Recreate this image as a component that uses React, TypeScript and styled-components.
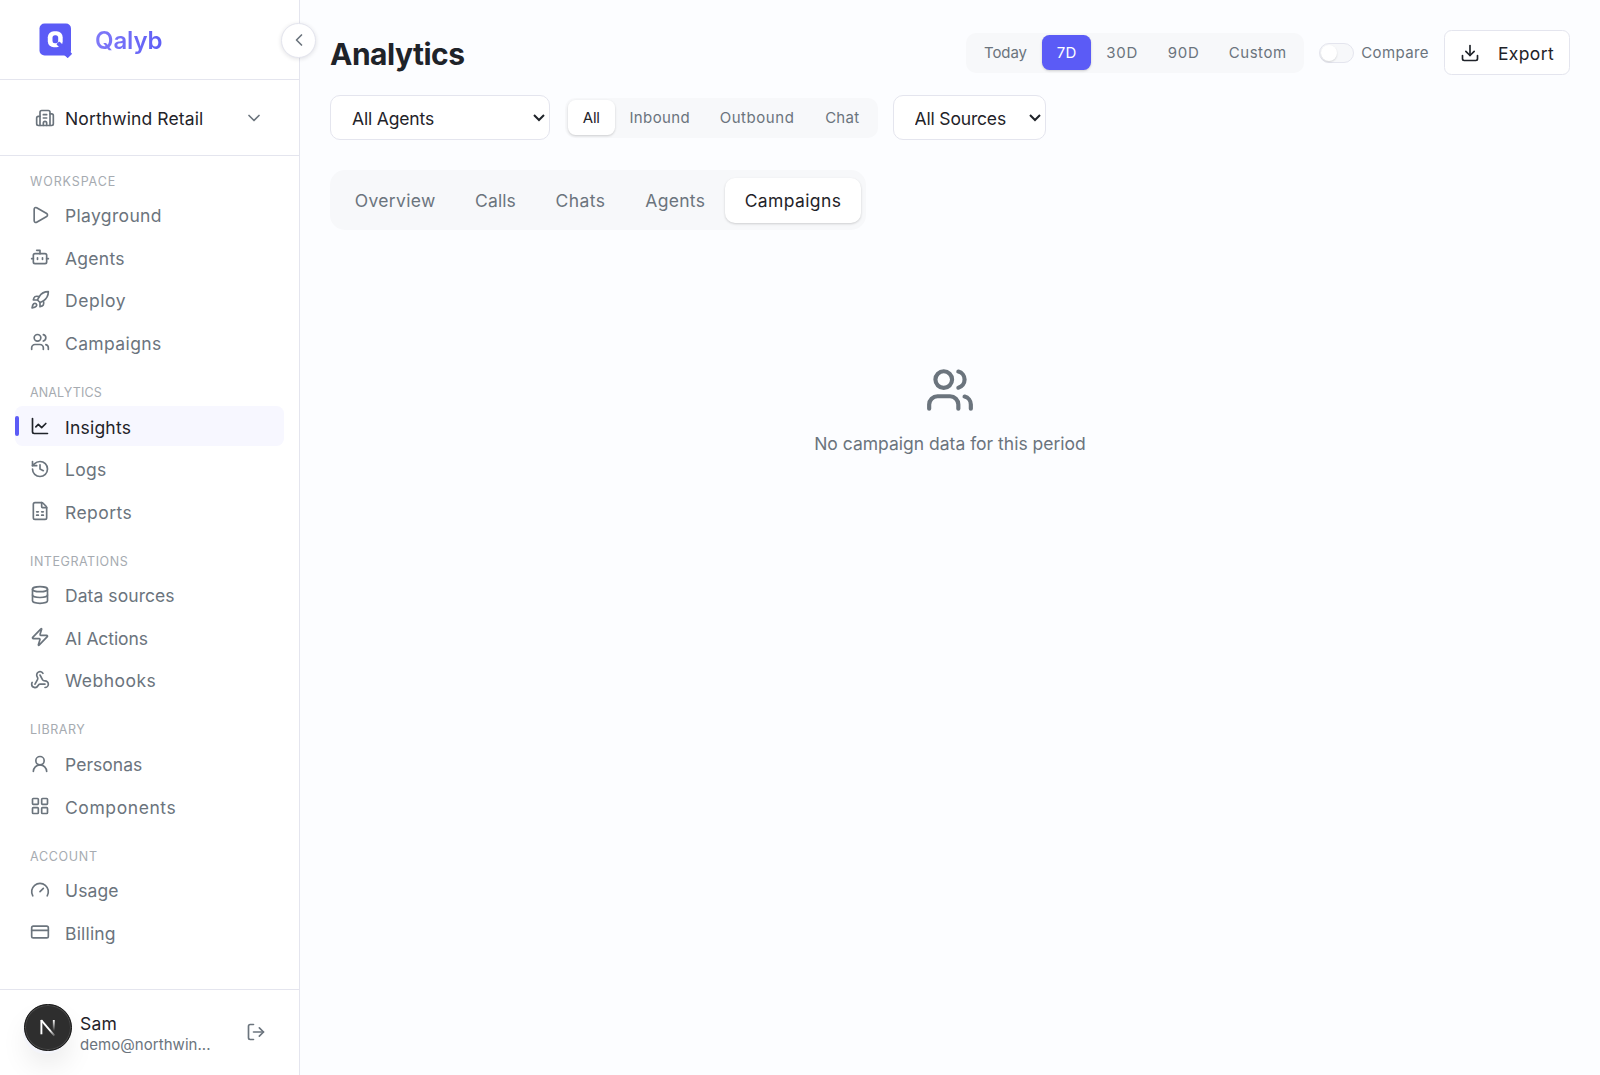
import React from "react";
import styled, { createGlobalStyle } from "styled-components";
import {
  Bot, Building2, ChartLine, ChevronDown, ChevronLeft, CreditCard, Database, Download,
  FileSpreadsheet, Gauge, History, LayoutGrid, LogOut, Play, Rocket, UserRound, Users,
  Webhook, Zap, type LucideIcon,
} from "lucide-react";

const color = {
  text: "#1f2329",
  muted: "#6b747d",
  faint: "#a6abb1",
  border: "#e4e5ee",
  primary: "#5b5bf6",
  page: "#fcfdff",
  track: "#f7f8fa",
};

const GlobalStyle = createGlobalStyle`
  *, *::before, *::after { box-sizing: border-box; }
  body {
    margin: 0;
    background: ${color.page};
    color: ${color.text};
    font-family: Inter, "Liberation Sans", sans-serif;
    font-size: 17.5px;
    -webkit-font-smoothing: antialiased;
  }
  button, select { font: inherit; color: inherit; margin: 0; }
  button { border: 0; background: none; padding: 0; }
`;

const Shell = styled.div`
  display: grid;
  grid-template-columns: 300px 1fr;
  height: 1075px;
  overflow: hidden;
`;

const Sidebar = styled.aside`
  position: relative;
  display: flex;
  flex-direction: column;
  background: #fff;
  border-right: 1px solid ${color.border};
`;

const Brand = styled.div`
  display: flex;
  align-items: center;
  gap: 22px;
  height: 80px;
  padding-left: 39px;
  border-bottom: 1px solid ${color.border};
`;

const BrandMark = styled.svg`
  margin-top: 3px;
`;

const BrandName = styled.span`
  padding-top: 3px;
  font-size: 24px;
  font-weight: 600;
  line-height: 32px;
  letter-spacing: -0.13px;
  background: linear-gradient(90deg, #8079f8, #5f5ff6);
  background-clip: text;
  color: transparent;
`;

const CollapseButton = styled.button`
  position: absolute;
  top: 23px;
  right: -17px;
  display: grid;
  place-items: center;
  width: 35px;
  height: 35px;
  padding-bottom: 1px;
  border: 1px solid ${color.border};
  border-radius: 50%;
  background: #fff;
  color: ${color.muted};
  box-shadow: 0 1px 4px rgba(20, 20, 40, 0.13);
`;

const WorkspaceSwitch = styled.button`
  display: flex;
  align-items: center;
  height: 76px;
  padding: 0 35px 0 35px;
  border-bottom: 1px solid ${color.border};
  letter-spacing: 0.12px;
  svg { color: ${color.muted}; }
  span { flex: 1; padding: 2px 0 0 10px; text-align: left; }
`;

const Nav = styled.nav`
  flex: 1;
  padding: 10px 15px 0;
`;

const NavGroup = styled.section`
  display: flex;
  flex-direction: column;
  gap: 2.5px;
  & + & { margin-top: 15px; }
`;

const NavLabel = styled.h2<{ $ls: number }>`
  margin: 0 0 -2.5px;
  padding: 6.5px 15px 3.5px;
  font-size: 12.5px;
  font-weight: 400;
  line-height: 18.75px;
  letter-spacing: ${(p) => p.$ls}px;
  color: ${color.faint};
`;

const NavItem = styled.a<{ $active: boolean; $ls: number }>`
  display: flex;
  align-items: center;
  gap: 15px;
  position: relative;
  height: 40px;
  padding: 0 15px;
  border-radius: 7.5px;
  color: ${(p) => (p.$active ? color.text : color.muted)};
  background: ${(p) => (p.$active ? "#f7f7ff" : "transparent")};
  letter-spacing: ${(p) => p.$ls}px;
  span { padding-top: 2px; }
  &::before {
    content: "";
    display: ${(p) => (p.$active ? "block" : "none")};
    position: absolute;
    left: 0;
    top: 10px;
    width: 4px;
    height: 20px;
    border-radius: 2px;
    background: ${color.primary};
  }
`;

const Account = styled.footer`
  display: flex;
  align-items: center;
  height: 86px;
  padding: 0 33px 0 80px;
  border-top: 1px solid ${color.border};
`;

const AccountText = styled.div`
  display: flex;
  flex-direction: column;
  flex: 1;
  min-width: 0;
  padding-top: 2px;
`;

const AccountName = styled.span`
  line-height: 22px;
  letter-spacing: 0.2px;
`;

const AccountMail = styled.span`
  width: 135px;
  font-size: 15px;
  line-height: 20px;
  letter-spacing: 0.05px;
  color: ${color.muted};
  white-space: nowrap;
`;

const SignOut = styled.button`
  display: flex;
  padding-bottom: 1px;
  color: ${color.muted};
`;

const DevBadge = styled.div`
  position: absolute;
  left: 24px;
  bottom: 24px;
  display: grid;
  place-items: center;
  width: 47.5px;
  height: 47.5px;
  border-radius: 50%;
  background: #2e2e2e;
  border: 1.5px solid #111;
  box-shadow: inset 0 0 0 1px #484848, -2px 4px 0 -1px #f3f4fa, 0 16px 32px -8px rgba(0, 0, 0, 0.16);
`;

const Main = styled.main`
  display: flex;
  flex-direction: column;
  padding: 30px;
`;

const Row = styled.div`
  display: flex;
  align-items: center;
  gap: 15px;
  height: 45px;
`;

const Filters = styled(Row)`
  margin-top: 20px;
`;

const Title = styled.h1`
  flex: 1;
  margin: 0;
  padding-top: 2px;
  font-size: 30px;
  font-weight: 700;
  line-height: 38px;
  letter-spacing: -0.5px;
`;

const Segmented = styled.div`
  display: flex;
  height: 40px;
  padding: 2.5px;
  border-radius: 10px;
  background: ${color.track};
`;

const Segment = styled.button<{ $w: number; $ls: number; $tone?: "primary" | "light" }>`
  width: ${(p) => p.$w}px;
  height: 35px;
  border-radius: 7.5px;
  font-size: 15px;
  letter-spacing: ${(p) => p.$ls}px;
  color: ${(p) => (p.$tone === "primary" ? "#fff" : p.$tone === "light" ? color.text : color.muted)};
  background: ${(p) => (p.$tone === "primary" ? color.primary : p.$tone === "light" ? "#fff" : "transparent")};
  box-shadow: ${(p) => (p.$tone ? "0 1px 3px rgba(0,0,0,.1), 0 1px 2px rgba(0,0,0,.08)" : "none")};
`;

const Compare = styled.label`
  display: flex;
  align-items: center;
  gap: 7.5px;
  font-size: 15px;
  letter-spacing: 0.4px;
  color: ${color.muted};
`;

const Switch = styled.span`
  display: flex;
  align-items: center;
  width: 35px;
  height: 20px;
  padding: 0 1.5px;
  border: 1px solid ${color.border};
  border-radius: 10px;
  background: ${color.track};
  &::after {
    content: "";
    width: 16px;
    height: 16px;
    border-radius: 50%;
    background: #fff;
    box-shadow: 0 1px 2px rgba(0, 0, 0, 0.14);
  }
`;

const ExportButton = styled.button`
  display: flex;
  align-items: center;
  gap: 18px;
  width: 126px;
  height: 45px;
  padding-left: 15px;
  border: 1px solid ${color.border};
  border-radius: 7.5px;
  background: #fff;
  letter-spacing: 0.35px;
  span { padding-top: 2px; }
`;

/* Scaled up as a whole so that the native arrow grows with the text. */
const Select = styled.select<{ $w: number }>`
  zoom: 1.25;
  width: ${(p) => p.$w / 1.25}px;
  height: 36px;
  padding: 1.6px 0 0 12.8px;
  border: 0.8px solid ${color.border};
  border-radius: 8px;
  background: #fff;
  font-size: 14px;
  letter-spacing: -0.13px;
`;

const Tabs = styled.div`
  display: flex;
  align-items: center;
  align-self: flex-start;
  height: 60px;
  margin-top: 30px;
  padding: 0 5px;
  border-radius: 15px;
  background: ${color.track};
`;

const Tab = styled.button<{ $w: number; $ls: number; $active: boolean }>`
  width: ${(p) => p.$w}px;
  height: 45px;
  border-radius: 10px;
  letter-spacing: ${(p) => p.$ls}px;
  color: ${(p) => (p.$active ? color.text : color.muted)};
  background: ${(p) => (p.$active ? "#fff" : "transparent")};
  box-shadow: ${(p) => (p.$active ? "0 1px 3px rgba(0,0,0,.1), 0 1px 2px rgba(0,0,0,.08)" : "none")};
`;

const Empty = styled.div`
  display: flex;
  flex-direction: column;
  align-items: center;
  gap: 15px;
  padding-top: 135px;
  color: ${color.muted};
  p { margin: 0; line-height: 28px; }
`;

type Item = { icon: LucideIcon; label: string; ls: number; active?: boolean };

const groups: { label: string; ls: number; items: Item[] }[] = [
  {
    label: "WORKSPACE", ls: 0.89, items: [
      { icon: Play, label: "Playground", ls: 0.34 },
      { icon: Bot, label: "Agents", ls: 0.26 },
      { icon: Rocket, label: "Deploy", ls: 0.58 },
      { icon: Users, label: "Campaigns", ls: 0.38 },
    ],
  },
  {
    label: "ANALYTICS", ls: 0.14, items: [
      { icon: ChartLine, label: "Insights", ls: 0.22, active: true },
      { icon: History, label: "Logs", ls: 0.29 },
      { icon: FileSpreadsheet, label: "Reports", ls: 0.44 },
    ],
  },
  {
    label: "INTEGRATIONS", ls: 0.54, items: [
      { icon: Database, label: "Data sources", ls: 0.07 },
      { icon: Zap, label: "AI Actions", ls: -0.1 },
      { icon: Webhook, label: "Webhooks", ls: 0.48 },
    ],
  },
  {
    label: "LIBRARY", ls: 0.55, items: [
      { icon: UserRound, label: "Personas", ls: 0.05 },
      { icon: LayoutGrid, label: "Components", ls: 0.58 },
    ],
  },
  {
    label: "ACCOUNT", ls: 0.7, items: [
      { icon: Gauge, label: "Usage", ls: 0.12 },
      { icon: CreditCard, label: "Billing", ls: 0.18 },
    ],
  },
];

const ranges = [
  { label: "Today", w: 73.5, ls: -0.1 },
  { label: "7D", w: 49, ls: 0.3 },
  { label: "30D", w: 62, ls: 0.8 },
  { label: "90D", w: 61, ls: 0.8 },
  { label: "Custom", w: 87, ls: 0.55 },
];

const channels = [
  { label: "All", w: 47.5, ls: -0.2 },
  { label: "Inbound", w: 89.5, ls: 0.37 },
  { label: "Outbound", w: 105, ls: 0.55 },
  { label: "Chat", w: 65.5, ls: 0.25 },
];

const tabs = [
  { label: "Overview", w: 120.5, ls: 0.34 },
  { label: "Calls", w: 80, ls: 0.1 },
  { label: "Chats", w: 90, ls: 0.46 },
  { label: "Agents", w: 99.5, ls: 0.28 },
  { label: "Campaigns", w: 136, ls: 0.38 },
];

function Logo() {
  return (
    <BrandMark width="34" height="36" viewBox="0 0 34 36">
      <rect x="0.5" y="0.5" width="31.500" height="32" rx="5" fill={color.primary} />
      <path
        d="M28.500 27.500 32.300 30.800 28.700 34.400 25 31Z"
        fill={color.primary}
        stroke={color.primary}
        strokeWidth="1.200"
        strokeLinejoin="round"
      />
      <rect x="8.800" y="8.200" width="14.900" height="16" rx="6" fill="#fff" />
      <rect x="13.500" y="12.300" width="5.700" height="8" rx="2.500" fill={color.primary} />
      <path
        d="M20.300 19.300 25 23.600V25.500H22.500L18.200 21.300Z"
        fill={color.primary}
        stroke={color.primary}
        strokeWidth="1.200"
        strokeLinejoin="round"
      />
    </BrandMark>
  );
}

function BadgeMark() {
  return (
    <svg width="20" height="20" viewBox="0 0 20 20" fill="none" strokeWidth="1.9">
      <defs>
        <linearGradient id="slant" x1="9" y1="9" x2="17" y2="19" gradientUnits="userSpaceOnUse">
          <stop offset="0.4" stopColor="#fff" />
          <stop offset="1" stopColor="#fff" stopOpacity="0.15" />
        </linearGradient>
        <linearGradient id="stem" x1="0" y1="3" x2="0" y2="14" gradientUnits="userSpaceOnUse">
          <stop stopColor="#fff" />
          <stop offset="1" stopColor="#fff" stopOpacity="0" />
        </linearGradient>
      </defs>
      <path d="M3.400 17.300V3" stroke="#fff" />
      <path d="M3.200 3.200 16.400 18.700" stroke="url(#slant)" />
      <path d="M15.800 3v11" stroke="url(#stem)" />
    </svg>
  );
}

export default function App() {
  return (
    <>
      <GlobalStyle />
      <Shell>
        <Sidebar>
          <Brand>
            <Logo />
            <BrandName>Qalyb</BrandName>
          </Brand>
          <CollapseButton aria-label="Collapse sidebar">
            <ChevronLeft size={20} />
          </CollapseButton>
          <WorkspaceSwitch>
            <Building2 size={20} />
            <span>Northwind Retail</span>
            <ChevronDown size={20} />
          </WorkspaceSwitch>
          <Nav>
            {groups.map((group) => (
              <NavGroup key={group.label}>
                <NavLabel $ls={group.ls}>{group.label}</NavLabel>
                {group.items.map(({ icon: Icon, label, ls, active }) => (
                  <NavItem key={label} $active={!!active} $ls={ls}>
                    <Icon size={20} />
                    <span>{label}</span>
                  </NavItem>
                ))}
              </NavGroup>
            ))}
          </Nav>
          <Account>
            <AccountText>
              <AccountName>Sam</AccountName>
              <AccountMail>demo@northwin...</AccountMail>
            </AccountText>
            <SignOut aria-label="Sign out">
              <LogOut size={20} />
            </SignOut>
          </Account>
          <DevBadge>
            <BadgeMark />
          </DevBadge>
        </Sidebar>
        <Main>
          <Row>
            <Title>Analytics</Title>
            <Segmented>
              {ranges.map((r) => (
                <Segment key={r.label} $w={r.w} $ls={r.ls} $tone={r.label === "7D" ? "primary" : undefined}>
                  {r.label}
                </Segment>
              ))}
            </Segmented>
            <Compare>
              <Switch />
              Compare
            </Compare>
            <ExportButton>
              <Download size={20} />
              <span>Export</span>
            </ExportButton>
          </Row>
          <Filters>
            <Select $w={220}>
              <option>All Agents</option>
            </Select>
            <Segmented>
              {channels.map((c) => (
                <Segment key={c.label} $w={c.w} $ls={c.ls} $tone={c.label === "All" ? "light" : undefined}>
                  {c.label}
                </Segment>
              ))}
            </Segmented>
            <Select $w={153.5}>
              <option>All Sources</option>
            </Select>
          </Filters>
          <Tabs>
            {tabs.map((t) => (
              <Tab key={t.label} $w={t.w} $ls={t.ls} $active={t.label === "Campaigns"}>
                {t.label}
              </Tab>
            ))}
          </Tabs>
          <Empty>
            <Users size={50} />
            <p>No campaign data for this period</p>
          </Empty>
        </Main>
      </Shell>
    </>
  );
}
